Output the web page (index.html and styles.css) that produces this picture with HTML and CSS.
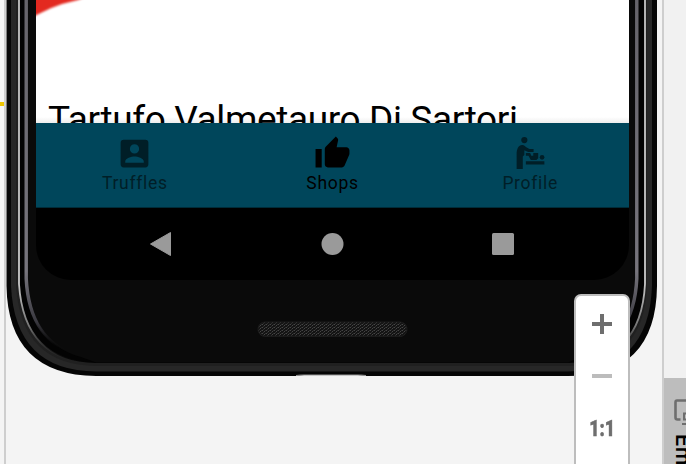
FILE: index.html
```html
<!DOCTYPE html>
<html lang="en">
<head>
<meta charset="utf-8">
<title>Emulator</title>
<link rel="stylesheet" href="styles.css">
</head>
<body>
<div class="workspace">
  <aside class="gutter"><span class="marker"></span></aside>
  <main class="stage">
    <svg class="frame" viewBox="0 0 656 464" width="656" height="464" aria-hidden="true">
      <defs>
        <linearGradient id="shine" gradientUnits="userSpaceOnUse" x1="0" y1="0" x2="0" y2="362">
          <stop offset="0" stop-color="#c4c4c4"/>
          <stop offset=".78" stop-color="#c9c9c9"/>
          <stop offset=".9" stop-color="#777"/>
          <stop offset="1" stop-color="#333" stop-opacity="0"/>
        </linearGradient>
        <linearGradient id="rim" gradientUnits="userSpaceOnUse" x1="0" y1="0" x2="0" y2="357">
          <stop offset="0" stop-color="#66646b"/>
          <stop offset=".76" stop-color="#77757d"/>
          <stop offset=".9" stop-color="#3a3940"/>
          <stop offset=".98" stop-color="#111" stop-opacity="0"/>
        </linearGradient>
        <pattern id="mesh" width="4" height="3" patternUnits="userSpaceOnUse">
          <rect width="4" height="3" fill="#141414"/>
          <path d="M0 0h1v1H0zM2 1h1v1H2z" fill="#454545"/>
          <path d="M1 2h1v1H1zM3 0h1v1H3z" fill="#2e2e2e"/>
        </pattern>
      </defs>
      <path d="M0-20H651V286Q650 376 562 376H90Q2 375 .500 286V-20Z" fill="#050505"/>
      <path d="M5-20H646V286Q643 371 562 371.500H90Q9 371 5 286V-20Z" fill="#272727"/>
      <path d="M10-20H641V286Q638 365 562 366H90Q15 365 10 286V-20Z" fill="#202020"/>
      <path d="M13-20H639V284Q635 362 562 363H90Q18 362 13 284V-20Z" fill="#030303" stroke="url(#shine)" stroke-width="1.800"/>
      <path d="M20-20V279Q23 342 75 356M631-20V279Q628 342 576 356" fill="none" stroke="url(#rim)" stroke-width="3"/>
      <path d="M21.500-20V279Q25 344 75 357L90 362.500H562L575 357Q626 344 629.500 279V-20Z" fill="#0a0a0a"/>
      <path d="M21-20V278Q24 340 70 354M630-20V278Q627 340 581 354" fill="none" stroke="url(#rim)" stroke-width="1.800"/>
      <rect x="252" y="322" width="149" height="14.500" rx="7" fill="url(#mesh)" stroke="#1b1b1b"/>
      <path d="M284 377.500q8-2.500 14-2.500h54q8 0 14 2.500z" fill="#f3f3f3"/>
      <path d="M290 375.500q4-.500 8-.500h54q4 0 8 .500" fill="none" stroke="#999"/>
    </svg>
    <section class="screen">
      <div class="content">
        <svg class="photo" viewBox="0 0 60 20" width="60" height="20" aria-hidden="true"><path d="M-8-8H62L42 0Q27 3 14 8.500Q8 11.500-8 19Z" fill="#e32920"/></svg>
        <h1 class="title">Tartufo Valmetauro Di Sartori</h1>
      </div>
      <nav class="tabs">
        <a class="tab">
          <svg viewBox="0 0 24 24" class="icon"><path fill-rule="evenodd" d="M3 5v14a2 2 0 0 0 2 2h14a2 2 0 0 0 2-2V5a2 2 0 0 0-2-2H5a2 2 0 0 0-2 2zm12 4a3 3 0 1 1-6 0 3 3 0 0 1 6 0zM6 17c0-2 4-3.100 6-3.100s6 1.100 6 3.100v1H6z"/></svg>
          <span class="label">Truffles</span>
        </a>
        <a class="tab active">
          <svg viewBox="0 0 24 24" class="icon"><path d="M1 21h4V9H1v12zm22-11c0-1.100-.9-2-2-2h-6.310l.95-4.570.03-.32c0-.41-.17-.79-.44-1.060L14.170 1 7.590 7.590C7.220 7.950 7 8.450 7 9v10c0 1.100.9 2 2 2h9c.83 0 1.540-.5 1.840-1.220l3.020-7.050c.09-.23.14-.47.14-.73v-2z"/></svg>
          <span class="label">Shops</span>
        </a>
        <a class="tab">
          <svg viewBox="0 0 24 24" class="icon"><circle cx="8" cy="3.300" r="2"/><path d="M3 22v-9.500C3 9 4.300 6.500 6.500 6.500c1 0 1.500.4 2.500 1.300l2.300 1.200H14v2h-3.500L8 9.900V13l-1 1v8zM9 17h12v2.100H9z"/><circle cx="19.500" cy="14.500" r="1.500"/><path d="M9 11.700h2.800l.7 1.700h1.300v-1.700H17v3.300l-1.200 1.200h-3.600L10.700 13.500H9z"/></svg>
          <span class="label">Profile</span>
        </a>
      </nav>
      <div class="system">
        <svg viewBox="0 0 24 26" width="24" height="26"><path d="M1.500 13 21.500 1.500v23z" stroke="#9a9a9a" stroke-linejoin="round"/></svg>
        <svg viewBox="0 0 24 24" width="24" height="24"><circle cx="12.500" cy="12" r="11"/></svg>
        <svg viewBox="0 0 24 24" width="24" height="24"><rect x="1" y="1" width="22" height="22" rx="1.500"/></svg>
      </div>
    </section>
    <div class="zoom">
      <svg viewBox="0 0 20 20" width="20" height="20"><path d="M8 0h4v8h8v4h-8v8H8v-8H0V8h8z" fill="#6e6e6e"/></svg>
      <svg viewBox="0 0 20 20" width="20" height="20"><path d="M0 8h20v4H0z" fill="#bcbcbc"/></svg>
      <span class="ratio">1:1</span>
    </div>
  </main>
  <aside class="rail">
    <div class="rail-tab">
      <svg viewBox="0 0 24 28" width="24" height="28" aria-hidden="true"><path d="M24 2.500H3q-1.500 0-1.500 2v15q0 2 2 2h3" fill="none" stroke="#6e6e6e" stroke-width="2.600"/><path d="M24 15.500H10v6h14M8 26h16" fill="none" stroke="#6e6e6e" stroke-width="2"/></svg>
      <span class="rail-label">Em</span>
    </div>
  </aside>
</div>
</body>
</html>
```
FILE: styles.css
```css
* { box-sizing: border-box; }
body { margin: 0; width: 686px; height: 464px; overflow: hidden; font-family: Roboto, sans-serif; background: #f4f4f4; }
.workspace { display: grid; grid-template-columns: 6px 656px 24px; height: 464px; }
.gutter { border-right: 2px solid #cecece; background: #f4f4f4; padding-top: 102px; }
.marker { display: block; width: 4px; height: 4px; background: #edc500; }
.stage { position: relative; height: 464px; overflow: hidden; padding-left: 30px; }
.frame { position: absolute; top: 0; left: 0; }
.screen { position: relative; width: 593px; height: 280px; overflow: hidden; background: #000; border-radius: 0 0 35px 35px; display: grid; grid-template-rows: 123px 85px 72px; }
.content { position: relative; background: linear-gradient(#fff 117px, #eee); overflow: hidden; padding: 98px 0 0 12px; }
.photo { position: absolute; top: 0; left: 0; filter: blur(1px); overflow: visible; }
.title { margin: 0; font-size: 37px; line-height: 44px; letter-spacing: -.38px; font-weight: 400; white-space: nowrap; color: #000; }
.tabs { display: grid; grid-template-columns: repeat(3, 1fr); background: #00465b; border-bottom: 1px solid #002c39; }
.tab { display: flex; flex-direction: column; align-items: center; padding-top: 12px; color: #001e27; }
.tab.active { color: #000; }
.icon { width: 37px; height: 37px; fill: currentColor; }
.label { font-size: 17.5px; line-height: 23px; letter-spacing: .7px; }
.system { display: grid; grid-template-columns: 171px 171px 171px; justify-content: center; justify-items: center; align-items: center; fill: #9a9a9a; padding-right: 1px; }
.zoom { position: absolute; top: 294px; left: 568px; width: 56px; height: 190px; background: #fff; border: 2px solid #bdbdbd; border-radius: 7px; display: flex; flex-direction: column; align-items: center; gap: 32px; padding-top: 18px; }
.ratio { color: #6e6e6e; font: 900 22px/22px Roboto, sans-serif; transform: scaleX(.8); -webkit-text-stroke: .5px #6e6e6e; }
.rail { border-left: 2px solid #cecece; background: #f1f1f1; padding-top: 378px; overflow: hidden; }
.rail-tab { margin-left: -2px; width: 24px; height: 86px; background: #bdbdbd; border-left: 2px solid #adadad; padding: 20px 0 0 10px; overflow: hidden; }
.rail-tab svg { display: block; }
.rail-label { display: block; margin-top: 8px; writing-mode: vertical-rl; font: 600 21px/18px Inter, sans-serif; color: #000; }
```
